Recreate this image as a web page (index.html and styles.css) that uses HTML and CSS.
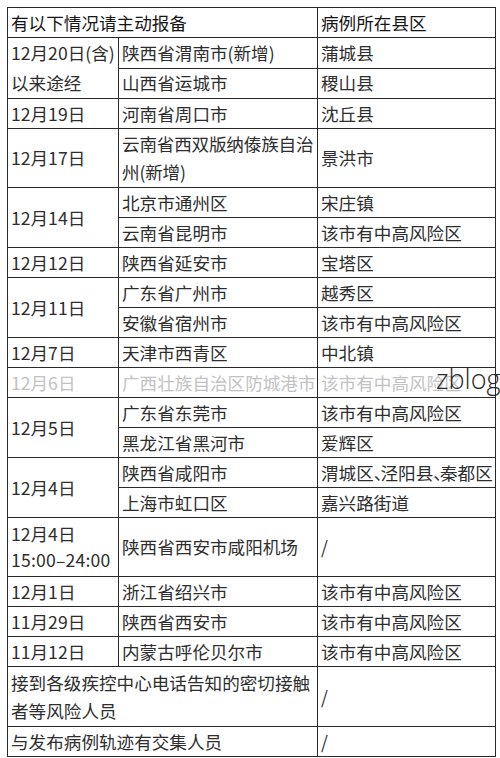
FILE: index.html
```html
<!DOCTYPE html>
<html lang="zh-CN">
<head>
<meta charset="utf-8">
<title>报备</title>
<link rel="stylesheet" href="styles.css">
</head>
<body>
<div class="page">
<table class="tbl">
  <colgroup>
    <col class="c1"><col class="c2"><col class="c3">
  </colgroup>
  <tr class="r"><td colspan="2" class="head">有以下情况请主动报备</td><td class="head">病例所在县区</td></tr>
  <tr class="r"><td rowspan="2" class="date tall">12月20日(含)<br>以来途经</td><td>陕西省渭南市(新增)</td><td>蒲城县</td></tr>
  <tr class="r"><td class="soft">山西省运城市</td><td class="soft">稷山县</td></tr>
  <tr class="r"><td class="date">12月19日</td><td>河南省周口市</td><td>沈丘县</td></tr>
  <tr class="r2"><td class="date">12月17日</td><td class="tight">云南省西双版纳傣族自治州(新增)</td><td>景洪市</td></tr>
  <tr class="r"><td rowspan="2" class="date">12月14日</td><td>北京市通州区</td><td>宋庄镇</td></tr>
  <tr class="r"><td>云南省昆明市</td><td>该市有中高风险区</td></tr>
  <tr class="r"><td class="date">12月12日</td><td>陕西省延安市</td><td>宝塔区</td></tr>
  <tr class="r"><td rowspan="2" class="date">12月11日</td><td>广东省广州市</td><td>越秀区</td></tr>
  <tr class="r"><td>安徽省宿州市</td><td>该市有中高风险区</td></tr>
  <tr class="r"><td class="date">12月7日</td><td>天津市西青区</td><td>中北镇</td></tr>
  <tr class="r faded"><td class="date">12月6日</td><td class="nowrap">广西壮族自治区防城港市</td><td>该市有中高风险区</td></tr>
  <tr class="r"><td rowspan="2" class="date">12月5日</td><td>广东省东莞市</td><td>该市有中高风险区</td></tr>
  <tr class="r"><td>黑龙江省黑河市</td><td>爱辉区</td></tr>
  <tr class="r"><td rowspan="2" class="date">12月4日</td><td>陕西省咸阳市</td><td class="nowrap">渭城区<span class="p">、</span>泾阳县<span class="p">、</span>秦都区</td></tr>
  <tr class="r"><td>上海市虹口区</td><td>嘉兴路街道</td></tr>
  <tr class="r2"><td class="date mid">12月4日<br><span class="time">15:00–24:00</span></td><td>陕西省西安市咸阳机场</td><td>/</td></tr>
  <tr class="r"><td class="date">12月1日</td><td>浙江省绍兴市</td><td>该市有中高风险区</td></tr>
  <tr class="r"><td class="date">11月29日</td><td>陕西省西安市</td><td>该市有中高风险区</td></tr>
  <tr class="r"><td class="date">11月12日</td><td>内蒙古呼伦贝尔市</td><td>该市有中高风险区</td></tr>
  <tr class="r3"><td colspan="2">接到各级疾控中心电话告知的密切接触<br>者等风险人员</td><td>/</td></tr>
  <tr class="r"><td colspan="2">与发布病例轨迹有交集人员</td><td>/</td></tr>
</table>
<div class="mark">zblog</div>
</div>
</body>
</html>
```

FILE: styles.css
```css
html, body {
  margin: 0;
  padding: 0;
  background: #ffffff;
}
.page {
  position: relative;
  width: 500px;
  height: 758px;
  padding: 7px 0 0 7px;
  box-sizing: border-box;
  overflow: hidden;
}
.tbl {
  border-collapse: collapse;
  table-layout: fixed;
  width: 488px;
  font-family: "Noto Sans CJK SC", "Noto Sans", sans-serif;
  font-size: 17.6px;
  line-height: 28px;
  color: #2e2e2e;
}
.c1 { width: 111px; }
.c2 { width: 199px; }
.c3 { width: 178px; }
.tbl td {
  border: 1.5px solid #2a2a2a;
  padding: 0 0 0 3px;
  vertical-align: middle;
  overflow: hidden;
}
.r { height: 30px; }
.r2 { height: 59px; }
.r3 { height: 60px; }
.head {
  color: #151515;
}
.soft {
  border-top-color: #777 !important;
}
.tall {
  line-height: 30px;
}
.mid {
  line-height: 26px;
}
.tight {
  letter-spacing: -0.2px;
}
.nowrap {
  white-space: nowrap;
}
.p {
  letter-spacing: -0.62em;
}
.time {
  letter-spacing: 0.2px;
}
.faded td {
  color: #c2c2c2;
  border-top-color: #c8c8c8;
}
.mark {
  position: absolute;
  left: 436px;
  top: 363px;
  font-family: "Open Sans", "DejaVu Sans", sans-serif;
  font-weight: 300;
  font-size: 27px;
  line-height: 32px;
  color: #2a2a2a;
  white-space: nowrap;
}
```
